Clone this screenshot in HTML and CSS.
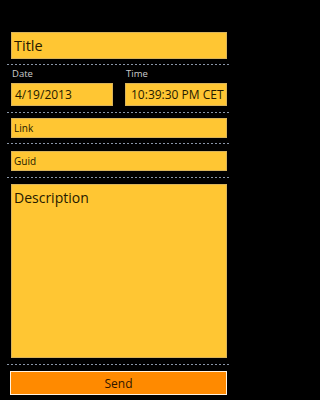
FILE: index.html
```html
<!DOCTYPE html>
<html>
<head>
<meta charset="utf-8">
<link rel="stylesheet" href="styles.css">
</head>
<body>
<div class="page">
  <div class="box title"><span>Title</span></div>
  <div class="sep s1"></div>
  <div class="row">
    <div class="col">
      <div class="label">Date</div>
      <div class="box mid"><span>4/19/2013</span></div>
    </div>
    <div class="col">
      <div class="label">Time</div>
      <div class="box mid"><span>10:39:30 PM CET</span></div>
    </div>
  </div>
  <div class="sep s2"></div>
  <div class="box small link"><span>Link</span></div>
  <div class="sep s3"></div>
  <div class="box small guid"><span>Guid</span></div>
  <div class="sep s4"></div>
  <div class="box desc"><span>Description</span></div>
  <div class="sep s5"></div>
  <div class="send">Send</div>
</div>
</body>
</html>
```
FILE: styles.css
```css
html, body {
  margin: 0;
  padding: 0;
  background: #000;
  width: 239px;
  height: 400px;
  overflow: hidden;
}
.page {
  display: flex;
  flex-direction: column;
  padding: 32px 12px 0 11px;
  font-family: "Open Sans", "Noto Sans", sans-serif;
  color: #261a00;
}
.box {
  box-sizing: border-box;
  background: #ffc633;
  border: 1px solid #d9b35a;
  display: flex;
  align-items: center;
  padding: 0 2px;
  white-space: nowrap;
  overflow: hidden;
}
.title {
  height: 27px;
  font-size: 14.5px;
}
.sep {
  height: 1px;
  margin-left: -4px;
  margin-right: -2px;
  background: repeating-linear-gradient(to right, #8a96a8 0 2px, transparent 2px 4px);
}
.s1 { margin-top: 5px; }
.row {
  display: flex;
  gap: 12px;
}
.col {
  flex: 1;
  display: flex;
  flex-direction: column;
}
.label {
  color: #cccccc;
  font-size: 9.5px;
  height: 18px;
  line-height: 15px;
  padding-top: 1px;
  box-sizing: border-box;
  padding-left: 1px;
}
.mid {
  height: 23px;
  font-size: 12px;
}
.mid span { padding-left: 1px; }
.col + .col .mid span { padding-left: 3px; }
.s2 { margin-top: 6px; }
.small {
  height: 20px;
  font-size: 10px;
}
.link { margin-top: 5px; }
.s3 { margin-top: 5px; }
.guid { margin-top: 7px; }
.s4 { margin-top: 6px; }
.desc {
  margin-top: 6px;
  height: 174px;
  align-items: flex-start;
  font-size: 14px;
  padding-top: 3px;
}
.s5 { margin-top: 6px; }
.send {
  margin-top: 6px;
  box-sizing: border-box;
  height: 24px;
  margin-left: -1px;
  background: #ff8a00;
  border: 1px solid #fff2e0;
  display: flex;
  align-items: center;
  justify-content: center;
  font-size: 12px;
  color: #2e1600;
}
```
